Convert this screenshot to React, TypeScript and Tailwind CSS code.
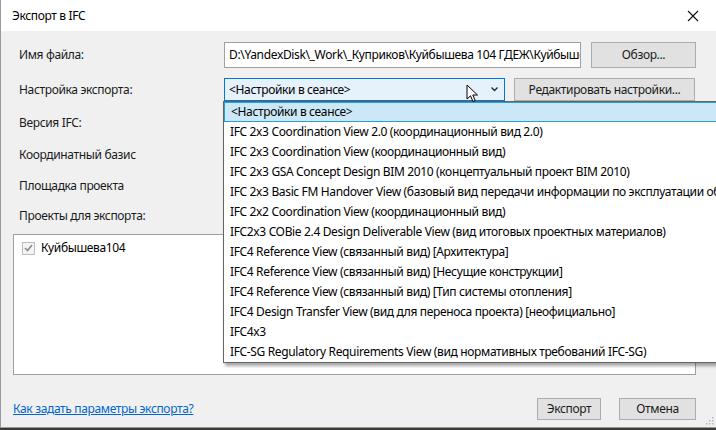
import React from 'react';

const font = { fontFamily: '"Segoe UI", "Noto Sans", sans-serif', letterSpacing: '-0.35px' };

const versions = [
  '<Настройки в сеансе>',
  'IFC 2x3 Coordination View 2.0 (координационный вид 2.0)',
  'IFC 2x3 Coordination View (координационный вид)',
  'IFC 2x3 GSA Concept Design BIM 2010 (концептуальный проект BIM 2010)',
  'IFC 2x3 Basic FM Handover View (базовый вид передачи информации по эксплуатации объекта)',
  'IFC 2x2 Coordination View (координационный вид)',
  'IFC2x3 COBie 2.4 Design Deliverable View (вид итоговых проектных материалов)',
  'IFC4 Reference View (связанный вид) [Архитектура]',
  'IFC4 Reference View (связанный вид) [Несущие конструкции]',
  'IFC4 Reference View (связанный вид) [Тип системы отопления]',
  'IFC4 Design Transfer View (вид для переноса проекта) [неофициально]',
  'IFC4x3',
  'IFC-SG Regulatory Requirements View (вид нормативных требований IFC-SG)',
];

function Button({ label, className }: { label: string; className: string }) {
  return (
    <div
      className={`flex items-center justify-center border border-[#adadad] bg-[#e1e1e1] text-[12px] text-[#1a1a1a] ${className}`}
    >
      {label}
    </div>
  );
}

function Label({ text, className }: { text: string; className: string }) {
  return <div className={`flex items-center pl-[18px] text-[12px] text-[#1a1a1a] ${className}`}>{text}</div>;
}

export default function App() {
  return (
    <div className="relative h-[430px] w-[716px] overflow-hidden bg-[#3b3a36]" style={font}>
      {/* window */}
      <div className="flex h-[428px] w-[740px] flex-col border-l border-b border-[#9a9a9a] bg-[#f0f0f0]">
        {/* title bar */}
        <div className="flex h-[31px] items-center justify-between bg-white pl-[11px] pr-[40px]">
          <span className="text-[12px] text-black">Экспорт в IFC</span>
          <svg width="12" height="12" viewBox="0 0 12 12" className="mr-[1px]">
            <path d="M1 1 L11 11 M11 1 L1 11" stroke="#111" strokeWidth="1.1" />
          </svg>
        </div>

        {/* file name */}
        <div className="mt-[11px] flex h-[26px] items-center">
          <Label text="Имя файла:" className="w-[223px]" />
          <div className="flex h-[26px] w-[357px] items-center overflow-hidden whitespace-nowrap border border-[#a0a0a0] bg-white pl-[4px] text-[12px] text-black">
            <span className="overflow-hidden">D:\YandexDisk\_Work\_Куприков\Куйбышева 104 ГДЕЖ\Куйбыше</span>
          </div>
          <Button label="Обзор..." className="ml-[10px] h-[26px] w-[105px]" />
        </div>

        {/* export setting */}
        <div className="mt-[10px] flex h-[23px] items-center">
          <Label text="Настройка экспорта:" className="w-[223px]" />
          <div className="flex h-[23px] w-[281px] items-center justify-between border border-[#0078d7] bg-[#e5f1fb] pl-[4px] pr-[6px] text-[12px] text-black">
            <span>&lt;Настройки в сеансе&gt;</span>
            <svg width="7" height="5" viewBox="0 0 7 5">
              <path d="M0.5 0.5 L3.5 3.5 L6.5 0.5" stroke="#222" strokeWidth="1.3" fill="none" />
            </svg>
          </div>
          <Button label="Редактировать настройки..." className="ml-[9px] h-[23px] w-[181px]" />
        </div>

        <Label text="Версия IFC:" className="mt-[10px] h-[23px]" />
        <Label text="Координатный базис" className="mt-[9px] h-[23px]" />
        <Label text="Площадка проекта" className="mt-[8px] h-[23px]" />
        <Label text="Проекты для экспорта:" className="mt-[7px] h-[23px]" />

        {/* projects list */}
        <div className="ml-[12px] mt-[7px] h-[141px] w-[683px] border border-[#a0a0a0] bg-white pl-[8px] pt-[4px]">
          <div className="flex items-center gap-[6px]">
            <div className="flex h-[13px] w-[13px] items-center justify-center border border-[#bcbcbc] bg-[#f4f4f4]">
              <svg width="9" height="8" viewBox="0 0 9 8">
                <path d="M1 4 L3.5 6.5 L8 1" stroke="#8a8a8a" strokeWidth="1.6" fill="none" />
              </svg>
            </div>
            <span className="text-[12px] text-black">Куйбышева104</span>
          </div>
        </div>

        {/* footer */}
        <div className="mt-[23px] flex h-[22px] w-[695px] items-center">
          <span className="ml-[12px] text-[12px] text-[#0066cc] underline">Как задать параметры экспорта?</span>
          <Button label="Экспорт" className="ml-auto h-[22px] w-[64px]" />
          <Button label="Отмена" className="ml-[18px] h-[22px] w-[77px]" />
        </div>
      </div>

      {/* resize grip */}
      <svg width="10" height="10" viewBox="0 0 10 10" className="absolute bottom-[3px] right-[2px]">
        {[[8, 0], [8, 3], [5, 3], [8, 6], [5, 6], [2, 6]].map(([x, y], i) => (
          <rect key={i} x={x} y={y} width="1.5" height="1.5" fill="#b8b8b8" />
        ))}
      </svg>

      {/* open dropdown list */}
      <div className="absolute left-[223px] top-[101px] w-[520px] border border-[#646464] bg-white shadow-[2px_3px_3px_rgba(0,0,0,0.35)]">
        {versions.map((v, i) => (
          <div
            key={i}
            className={`flex h-[20px] items-center whitespace-nowrap pl-[6px] text-[12px] text-black ${
              i === 0 ? 'border border-[#26a0da] bg-[#cce8f6]' : ''
            }`}
          >
            {v}
          </div>
        ))}
      </div>

      {/* mouse cursor */}
      <svg width="14" height="20" viewBox="0 0 14 20" className="absolute left-[466px] top-[84px]">
        <path d="M1 1 L1 15 L4.5 11.8 L7 17.5 L9.2 16.5 L6.8 11 L11.5 11 Z" fill="white" stroke="black" strokeWidth="1" strokeLinejoin="round" />
      </svg>
    </div>
  );
}
